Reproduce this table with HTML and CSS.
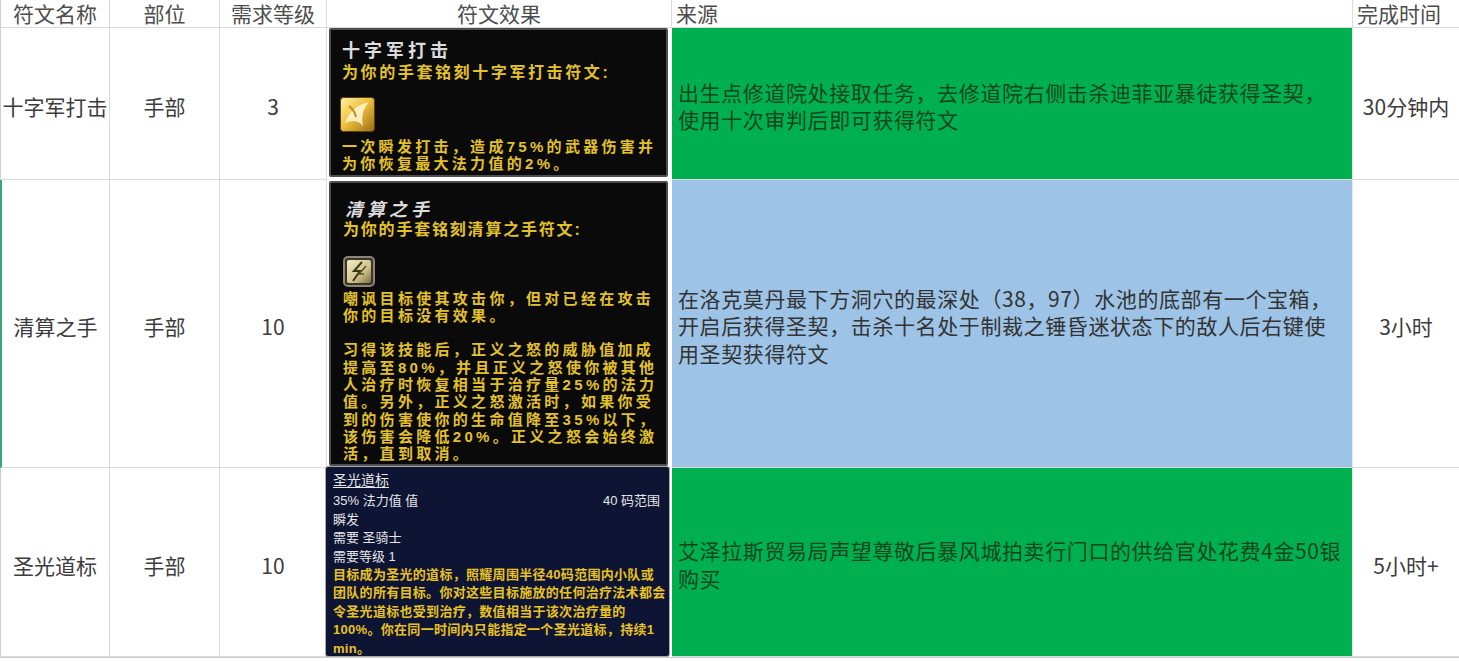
FILE: index.html
```html
<!DOCTYPE html>
<html lang="zh-CN">
<head>
<meta charset="utf-8">
<title>符文</title>
<link rel="stylesheet" href="styles.css">
</head>
<body>
<div class="sheet">
  <div class="c h first">符文名称</div>
  <div class="c h">部位</div>
  <div class="c h">需求等级</div>
  <div class="c h">符文效果</div>
  <div class="c h left">来源</div>
  <div class="c h left last">完成时间</div>

  <div class="c v first">十字军打击</div>
  <div class="c v">手部</div>
  <div class="c v">3</div>
  <div class="c tipcell r1">
    <div class="tip dark t1">
      <div class="tt-title">十字军打击</div>
      <div class="tt-sub">为你的手套铭刻十字军打击符文:</div>
      <svg class="icon i1" width="35" height="35" viewBox="0 0 35 35">
        <defs>
          <linearGradient id="g1" x1="0" y1="0" x2="1" y2="1">
            <stop offset="0" stop-color="#fff1a8"/>
            <stop offset="0.45" stop-color="#f0c23c"/>
            <stop offset="1" stop-color="#9a6a14"/>
          </linearGradient>
        </defs>
        <rect x="0.5" y="0.5" width="34" height="34" rx="3" fill="url(#g1)" stroke="#5a3f10"/>
        <path d="M5 26 C9 15 16 8 29 5 C23 12 21 19 23 29 C18 23 12 23 5 26Z" fill="#fff8d6" opacity="0.85"/>
        <path d="M9 9 C13 12 15 15 16 20" stroke="#c08a20" stroke-width="2" fill="none"/>
      </svg>
      <div class="tt-body"><div>一次瞬发打击，造成75%的武器伤害并</div><div>为你恢复最大法力值的2%。</div></div>
    </div>
  </div>
  <div class="c src green">出生点修道院处接取任务，去修道院右侧击杀迪菲亚暴徒获得圣契，<br>使用十次审判后即可获得符文</div>
  <div class="c v last">30分钟内</div>

  <div class="c v first accent">清算之手</div>
  <div class="c v">手部</div>
  <div class="c v">10</div>
  <div class="c tipcell r2">
    <div class="tip dark t2">
      <div class="tt-title ital">清算之手</div>
      <div class="tt-sub">为你的手套铭刻清算之手符文:</div>
      <svg class="icon i2" width="32" height="31" viewBox="0 0 32 31">
        <defs>
          <linearGradient id="g2" x1="0" y1="0" x2="1" y2="1">
            <stop offset="0" stop-color="#f2ecc4"/>
            <stop offset="0.6" stop-color="#cfc38a"/>
            <stop offset="1" stop-color="#7d7040"/>
          </linearGradient>
        </defs>
        <rect x="1" y="1" width="30" height="29" rx="4" fill="#3a3526" stroke="#8a8678" stroke-width="2"/>
        <rect x="4" y="4" width="24" height="23" rx="2" fill="url(#g2)"/>
        <path d="M19 6 L11 15 L17 15 L10 25" stroke="#3d3518" stroke-width="2" fill="none"/>
        <path d="M23 10 L16 18 L21 18" stroke="#5a4e22" stroke-width="1.5" fill="none"/>
      </svg>
      <div class="tt-body">
        <div>嘲讽目标使其攻击你，但对已经在攻击</div>
        <div>你的目标没有效果。</div>
        <div class="gap"></div>
        <div>习得该技能后，正义之怒的威胁值加成</div>
        <div>提高至80%，并且正义之怒使你被其他</div>
        <div>人治疗时恢复相当于治疗量25%的法力</div>
        <div>值。另外，正义之怒激活时，如果你受</div>
        <div>到的伤害使你的生命值降至35%以下，</div>
        <div>该伤害会降低20%。正义之怒会始终激</div>
        <div>活，直到取消。</div>
      </div>
    </div>
  </div>
  <div class="c src blue">在洛克莫丹最下方洞穴的最深处（38，97）水池的底部有一个宝箱，<br>开启后获得圣契，击杀十名处于制裁之锤昏迷状态下的敌人后右键使<br>用圣契获得符文</div>
  <div class="c v last">3小时</div>

  <div class="c v first">圣光道标</div>
  <div class="c v">手部</div>
  <div class="c v">10</div>
  <div class="c tipcell r3">
    <div class="tip navy t3">
      <div class="n-title">圣光道标</div>
      <div class="n-row"><span>35% 法力值 值</span><span>40 码范围</span></div>
      <div class="n-row">瞬发</div>
      <div class="n-row">需要 圣骑士</div>
      <div class="n-row">需要等级 1</div>
      <div class="n-desc">目标成为圣光的道标，照耀周围半径40码范围内小队或<br>团队的所有目标。你对这些目标施放的任何治疗法术都会<br>令圣光道标也受到治疗，数值相当于该次治疗量的<br>100%。你在同一时间内只能指定一个圣光道标，持续1<br>min。</div>
    </div>
  </div>
  <div class="c src green">艾泽拉斯贸易局声望尊敬后暴风城拍卖行门口的供给官处花费4金50银<br>购买</div>
  <div class="c v last">5小时+</div>
</div>
</body>
</html>
```

FILE: styles.css
```css
* { box-sizing: border-box; }
html, body { margin: 0; padding: 0; background: #ffffff; }
body {
  font-family: "Noto Sans CJK SC", "Noto Sans", sans-serif;
  color: #3a3a3a;
  width: 1459px;
  height: 661px;
  overflow: hidden;
}
.sheet {
  display: grid;
  grid-template-columns: 110px 110px 107px 345px 681px 106px;
  grid-template-rows: 28px 152px 288px 189px;
  border-bottom: 1px solid #cfcfcf;
}
.c {
  border-right: 1px solid #dadada;
  border-bottom: 1px solid #dadada;
  font-size: 21px;
  min-width: 0;
}
.c.last { border-right: none; }
.c.first { border-left: 1px solid #cfcfcf; }
.c.accent { border-left: 2px solid #35a878; }
.h {
  line-height: 27px;
  text-align: center;
  color: #4d4d4d;
  white-space: nowrap;
}
.h.left { text-align: left; padding-left: 4px; }
.v {
  display: flex;
  align-items: center;
  justify-content: center;
  padding-top: 5px;
  white-space: nowrap;
  color: #3c3c3c;
}
.src {
  display: flex;
  align-items: center;
  padding: 5px 0 0 6px;
  line-height: 27.5px;
  letter-spacing: 0.6px;
  white-space: nowrap;
  border-right: 1px solid #e6e6e6;
}
.green { background: #00b050; color: #10461c; }
.blue { background: #9dc3e6; color: #333333; }

.tipcell { display: flex; border-right: none; border-bottom: none; }
.tipcell.r1 { padding: 0 4px 3px 2px; }
.tipcell.r2 { padding: 1px 4px 2px 2px; }
.tipcell.r3 { padding: 0 2px 0 0; }

.tip {
  flex: 1;
  overflow: hidden;
  font-family: "Liberation Sans", "Noto Sans CJK SC", sans-serif;
}
.dark {
  background: #0a0a0a;
  border: 2px solid #4e4e4e;
  border-radius: 2px;
  color: #e3c12b;
  font-weight: bold;
}
.t1 { padding: 10px 0 0 9px; }
.t2 { padding: 17px 0 0 12px; }
.tt-title {
  color: #dcdcdc;
  font-size: 18px;
  line-height: 22px;
  letter-spacing: 4px;
  padding-left: 2px;
}
.t2 .tt-title { line-height: 21px; }
.ital { font-style: italic; }
.tt-sub {
  font-size: 16px;
  line-height: 22px;
  letter-spacing: 2.6px;
  padding-left: 2px;
}
.t2 .tt-sub { line-height: 18.5px; letter-spacing: 1.8px; padding-left: 0; }
.icon { display: block; }
.t1 .icon { margin-top: 13px; }
.t2 .icon { margin-top: 16px; }
.tt-body {
  font-size: 15px;
  letter-spacing: 3.3px;
  white-space: nowrap;
  padding-left: 2px;
}
.tt-body > div { height: 17.3px; line-height: 17.3px; }
.tt-body > .gap { height: 17.3px; }
.t1 .tt-body { margin-top: 6px; }
.t1 .tt-body > div { height: 17px; line-height: 17px; }
.t2 .tt-body { margin-top: 3px; padding-left: 0; }

.navy {
  margin: -2px 0 0 -2px;
  background: #0d1434;
  border: 1px solid #a9a9a9;
  border-radius: 3px;
  padding: 4px 9px 0 7px;
  font-size: 13px;
  color: #e6e6e6;
}
.n-title {
  line-height: 18px;
  font-size: 14px;
  text-decoration: underline;
  text-underline-offset: 2px;
  margin-bottom: 3px;
}
.n-row {
  line-height: 18.5px;
  display: flex;
  justify-content: space-between;
  white-space: nowrap;
}
.n-desc {
  line-height: 18.4px;
  color: #e8c21e;
  font-weight: bold;
  letter-spacing: 0.3px;
  white-space: nowrap;
}
```
